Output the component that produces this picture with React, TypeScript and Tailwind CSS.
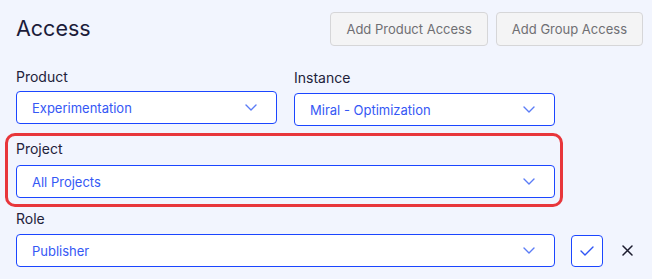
const Chevron = () => (
  <svg width="12" height="7" viewBox="0 0 12 7" fill="none" className="shrink-0">
    <path d="M1 1l5 5 5-5" stroke="#5b7cf6" strokeWidth="1.4" strokeLinecap="round" strokeLinejoin="round" />
  </svg>
);

const Select = ({ value, width }: { value: string; width: string }) => (
  <div
    className={`${width} h-[33px] flex items-center justify-between bg-white border border-[#1b46ff] rounded-[4px] pl-[15px] pr-[19px]`}
  >
    <span className="text-[13px] leading-[20px] text-[#3558f5]">{value}</span>
    <Chevron />
  </div>
);

const Label = ({ children, mb }: { children: string; mb: string }) => (
  <div className={`text-[14px] leading-[20px] text-[#22223a] ${mb}`}>{children}</div>
);

const App = () => {
  return (
    <div
      className="w-[652px] h-[279px] bg-[#f2f5fe] pl-4 pr-[9px] pt-[12px] overflow-hidden"
      style={{ fontFamily: "Inter, 'Noto Sans', sans-serif" }}
    >
      <div className="flex items-start justify-between">
        <h1 className="mt-[2px] text-[21.5px] leading-[28px] text-[#1c1c3a] font-normal">Access</h1>
        <div className="flex gap-[8px]">
          <button className="h-[34px] px-[15px] bg-[#f4f4f5] border border-[#d6d6d8] rounded-[4px] text-[13px] leading-[20px] text-[#6f6f73]">
            Add Product Access
          </button>
          <button className="h-[34px] px-[15px] bg-[#f4f4f5] border border-[#d6d6d8] rounded-[4px] text-[13px] leading-[20px] text-[#6f6f73]">
            Add Group Access
          </button>
        </div>
      </div>

      <div className="flex gap-[17px] mt-[21px]">
        <div className="flex flex-col">
          <Label mb="mb-[4px]">Product</Label>
          <Select value="Experimentation" width="w-[261px]" />
        </div>
        <div className="flex flex-col mt-[1px]">
          <Label mb="mb-[5px]">Instance</Label>
          <Select value="Miral - Optimization" width="w-[261px]" />
        </div>
      </div>

      <div className="mt-[7px] -ml-[11px] w-[558px] border-[3px] border-[#e8363b] rounded-[10px] pl-[8px] pt-[3px] pb-[6px]">
        <Label mb="mb-[6px]">Project</Label>
        <Select value="All Projects" width="w-[539px]" />
      </div>

      <div className="mt-[2px]">
        <Label mb="mb-[5px]">Role</Label>
        <div className="flex items-center">
          <Select value="Publisher" width="w-[539px]" />
          <button className="ml-4 w-[32px] h-[32px] flex items-center justify-center bg-white border border-[#1b46ff] rounded-[4px]">
            <svg width="14" height="10" viewBox="0 0 14 10" fill="none">
              <path d="M1 5l4 4 8-8" stroke="#2f55f5" strokeWidth="1.4" strokeLinecap="round" strokeLinejoin="round" />
            </svg>
          </button>
          <button className="ml-[18px] w-[12px] h-[12px] flex items-center justify-center">
            <svg width="11" height="11" viewBox="0 0 11 11" fill="none">
              <path d="M1 1l9 9M10 1l-9 9" stroke="#1c1c2e" strokeWidth="1.5" strokeLinecap="round" />
            </svg>
          </button>
        </div>
      </div>
    </div>
  );
};

export default App;
